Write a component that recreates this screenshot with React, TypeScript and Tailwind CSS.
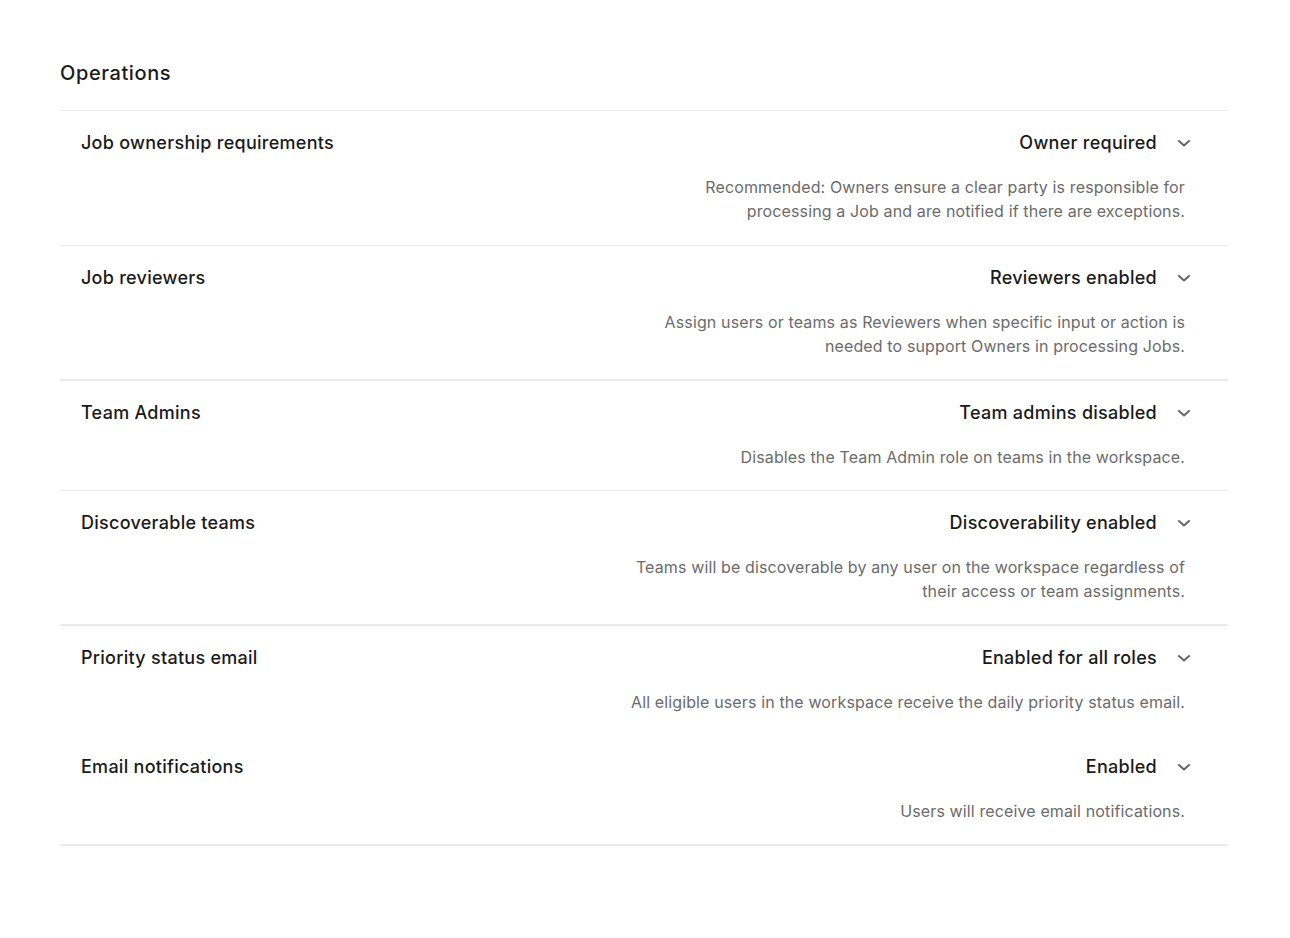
import React from "react";

type Setting = {
  title: string;
  value: string;
  desc: string[];
  bottom: string;
};

const settings: Setting[] = [
  {
    title: "Job ownership requirements",
    value: "Owner required",
    desc: [
      "Recommended: Owners ensure a clear party is responsible for",
      "processing a Job and are notified if there are exceptions.",
    ],
    bottom: "border-b border-[#ebebeb] pb-[22px]",
  },
  {
    title: "Job reviewers",
    value: "Reviewers enabled",
    desc: [
      "Assign users or teams as Reviewers when specific input or action is",
      "needed to support Owners in processing Jobs.",
    ],
    bottom: "border-b-2 border-[#ebebeb] pb-[21px]",
  },
  {
    title: "Team Admins",
    value: "Team admins disabled",
    desc: ["Disables the Team Admin role on teams in the workspace."],
    bottom: "border-b border-[#ebebeb] pb-[21px]",
  },
  {
    title: "Discoverable teams",
    value: "Discoverability enabled",
    desc: [
      "Teams will be discoverable by any user on the workspace regardless of",
      "their access or team assignments.",
    ],
    bottom: "border-b-2 border-[#ebebeb] pb-[21px]",
  },
  {
    title: "Priority status email",
    value: "Enabled for all roles",
    desc: ["All eligible users in the workspace receive the daily priority status email."],
    bottom: "pb-[21px]",
  },
  {
    title: "Email notifications",
    value: "Enabled",
    desc: ["Users will receive email notifications."],
    bottom: "border-b-2 border-[#ebebeb] pb-[21px]",
  },
];

function Chevron() {
  return (
    <svg width="14" height="14" viewBox="0 0 14 14" fill="none" className="shrink-0">
      <path d="M2 5l5 4.5L12 5" stroke="#666666" strokeWidth="2" strokeLinecap="round" strokeLinejoin="round" />
    </svg>
  );
}

function Row({ s }: { s: Setting }) {
  return (
    <div className={`pl-[21px] pr-[37px] pt-5 ${s.bottom}`}>
      <div className="flex items-center justify-between h-6">
        <div className="text-[18px] font-[450] tracking-[0.015em] text-[#1a1a1a] leading-6">{s.title}</div>
        <button className="flex items-center gap-[20px] text-[18px] font-[450] tracking-[0.015em] leading-6 text-[#1a1a1a]">
          <span>{s.value}</span>
          <Chevron />
        </button>
      </div>
      <div className="mt-5 pr-[6px] text-right text-[16px] leading-6 text-[#6b6b6b] tracking-[0.008em]">
        {s.desc.map((l, i) => (
          <div key={i}>{l}</div>
        ))}
      </div>
    </div>
  );
}

export default function App() {
  return (
    <div className="min-h-[938px] bg-white" style={{ fontFamily: "Inter, 'Noto Sans', sans-serif" }}>
      <div className="ml-[60px] w-[1168px] pt-[58px]">
        <h2 className="text-[20px] font-[450] tracking-[0.03em] leading-[30px] text-[#1a1a1a] pb-[22px]">Operations</h2>
        <div className="border-t border-[#ebebeb]">
          {settings.map((s) => (
            <Row key={s.title} s={s} />
          ))}
        </div>
      </div>
    </div>
  );
}
